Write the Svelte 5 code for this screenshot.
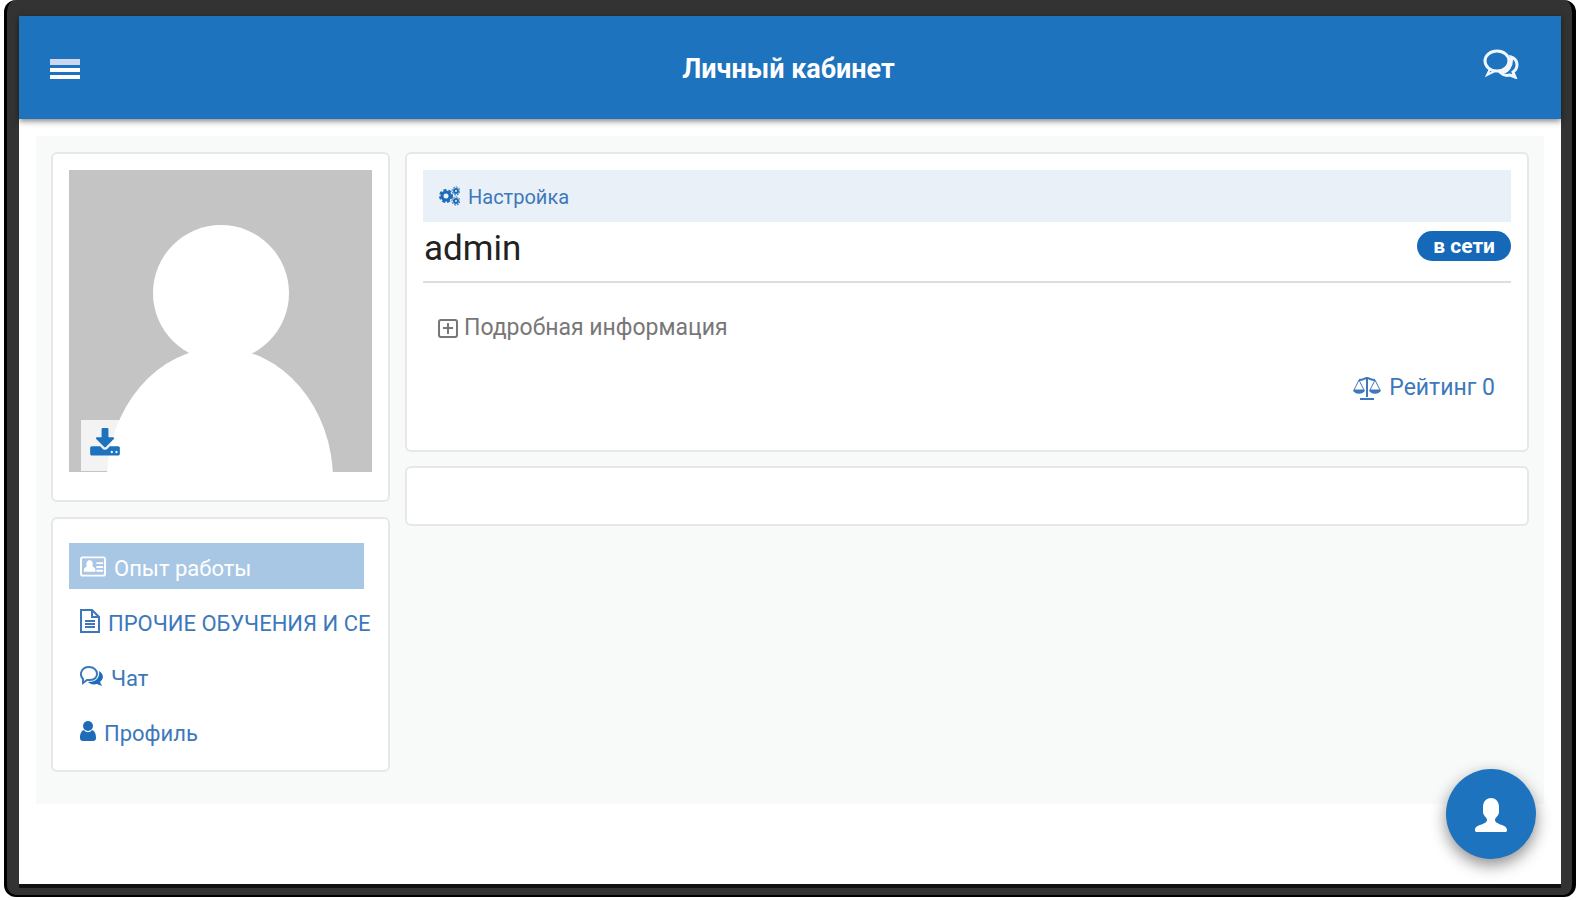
<script>
	let active = $state('work')
	let showDetails = $state(false)

	const menu = [
		{ id: 'work', icon: 'card', title: 'Опыт работы' },
		{ id: 'docs', icon: 'file', title: 'ПРОЧИЕ ОБУЧЕНИЯ И СЕ' },
		{ id: 'chat', icon: 'chat', title: 'Чат' },
		{ id: 'profile', icon: 'user', title: 'Профиль' }
	]
</script>

<div class="device">
	<div class="screen">
		<header>
			<button class="plain" aria-label="Меню">
				<svg width="30" height="20" viewBox="0 0 30 20">
					<path d="M0 0h30v6H0z" fill="#ccd6ef" />
					<path d="M0 9h30v4H0zM0 16h30v4H0z" fill="#fff" />
				</svg>
			</button>
			<h1>Личный кабинет</h1>
			<button class="plain messages" aria-label="Сообщения">
				<svg width="36" height="30" viewBox="0 0 36 30" fill="none" stroke="#f2f7ff">
					<ellipse cx="14" cy="12" rx="12" ry="10" stroke-width="3" />
					<path d="M7 20l-3 6 8-4" stroke-width="2" />
					<path d="M28 8c7 2 8 11 2 15l2 5-5-2c-4 1-7 0-9-2 6-1 12-6 10-16z" stroke-width="3" />
				</svg>
			</button>
		</header>

		<main>
			<aside>
				<section class="card photo">
					<div class="avatar">
						<svg class="person" viewBox="0 0 303 302">
							<circle cx="152" cy="123" r="68" fill="#fff" />
							<ellipse cx="151" cy="310" rx="113" ry="132" fill="#fff" />
						</svg>
						<button class="upload" aria-label="Загрузить фото">
							<svg width="32" height="32" viewBox="0 0 1792 1792" fill="currentColor">
								<path d="M1344 1344q0-26-19-45t-45-19-45 19-19 45 19 45 45 19 45-19 19-45zm256 0q0-26-19-45t-45-19-45 19-19 45 19 45 45 19 45-19 19-45zm128-224v320q0 40-28 68t-68 28h-1472q-40 0-68-28t-28-68v-320q0-40 28-68t68-28h465l135 136q58 56 136 56t136-56l136-136h464q40 0 68 28t28 68zm-325-569q17 41-14 70l-448 448q-18 19-45 19t-45-19l-448-448q-31-29-14-70 17-39 59-39h256v-448q0-26 19-45t45-19h256q26 0 45 19t19 45v448h256q42 0 59 39z" />
							</svg>
						</button>
					</div>
				</section>

				<nav class="card">
					<ul>
						{#each menu as item (item.id)}
							<li>
								<a
									href="#{item.id}"
									class:active={active === item.id}
									onclick={() => (active = item.id)}>
									{#if item.icon === 'card'}
										<svg width="26" height="21" viewBox="0 0 27 21">
											<rect x="1" y="1" width="25" height="19" rx="2" fill="none" stroke="currentColor" stroke-width="2" />
											<path d="M4 16v-3l3-3c-1-4 1-6 3-6s4 2 3 6l3 3v3zM17 6h7v2h-7zM17 10h7v2h-7zM17 14h7v2h-7z" fill="currentColor" />
										</svg>
									{:else if item.icon === 'file'}
										<svg width="20" height="24" viewBox="0 0 20 24" fill="none" stroke="currentColor" stroke-width="2">
											<path d="M1 1h11l7 7v15H1zM12 1v7h7" />
											<path d="M5 12h10M5 15h10M5 18h10" />
										</svg>
									{:else if item.icon === 'chat'}
										<svg width="23" height="20" viewBox="0 0 23 20">
											<path d="M3 13C-1 9 1 1 9 1c10 0 11 13 1 13H7l-4 3z" fill="none" stroke="currentColor" stroke-width="2" />
											<path d="M19 5c5 3 5 8 1 11l2 4-5-2c-4 1-7 0-9-2 8 0 12-4 11-11z" fill="#1e6cb8" />
										</svg>
									{:else}
										<svg width="16" height="20" viewBox="0 0 16 20" fill="#1e6cb8">
											<circle cx="8" cy="5" r="5" />
											<path d="M4 9c2 3 6 3 8 0 3 1 4 4 4 8 0 2-1 3-3 3H3c-2 0-3-1-3-3 0-4 1-7 4-8z" />
										</svg>
									{/if}
									<span>{item.title}</span>
								</a>
							</li>
						{/each}
					</ul>
				</nav>
			</aside>

			<div class="content">
				<section class="card info">
					<div class="toolbar">
						<a href="#settings">
							<svg width="21" height="20" viewBox="0 0 21 20" fill="none" stroke="#1e6cb8">
								<circle cx="7" cy="10" r="4" stroke-width="3" />
								<circle cx="7" cy="10" r="6" stroke-width="2" stroke-dasharray="3 2" />
								<circle cx="17" cy="5" r="2" stroke-width="2" />
								<circle cx="17" cy="5" r="4" stroke-width="1" stroke-dasharray="2 1" />
								<circle cx="17" cy="15" r="2" stroke-width="2" />
								<circle cx="17" cy="15" r="4" stroke-width="1" stroke-dasharray="2 1" />
							</svg>
							<span>Настройка</span>
						</a>
					</div>
					<div class="name">
						<h2>admin</h2>
						<span class="badge">в сети</span>
					</div>
					<button
						class="plain details"
						aria-expanded={showDetails}
						onclick={() => (showDetails = !showDetails)}>
						<svg width="20" height="19" viewBox="0 0 20 19" fill="none" stroke="currentColor" stroke-width="2">
							<rect x="1" y="1" width="18" height="17" rx="2" />
							<path d="M10 4v11M5 9h10" />
						</svg>
						<span>Подробная информация</span>
					</button>
					<div class="rating">
						<a href="#rating">
							<svg width="28" height="24" viewBox="0 0 28 24" fill="none" stroke="currentColor">
								<path d="M6 4c5 0 5-2 8-2s3 2 8 2M14 1v20M7 23h14" stroke-width="2" />
								<path d="M6 4L1 14h10zM22 4l-5 10h10z" />
								<path d="M0 14h12c-1 5-11 5-12 0zM16 14h12c-1 5-11 5-12 0z" fill="currentColor" stroke="none" />
							</svg>
							<span>Рейтинг 0</span>
						</a>
					</div>
				</section>
				<section class="card empty"></section>
			</div>
		</main>

		<button class="fab" aria-label="Личный кабинет">
			<svg width="34" height="36" viewBox="0 0 34 36" fill="#fff">
				<path d="M9 9c0-12 16-12 16 0v5c0 4-4 5-4 8 0 5 12 4 12 10 0 2-1 2-2 2H3c-1 0-2 0-2-2 0-6 12-5 12-10 0-3-4-4-4-8z" />
			</svg>
		</button>
	</div>
</div>

<style>
	:global(body) {
		background: #fff;
	}

	.device {
		box-sizing: border-box;
		display: flex;
		min-height: calc(100vh - 3px);
		margin: 0 2px 3px 4px;
		padding: 16px 11px 7px 12px;
		border: solid #000;
		border-width: 0 4px 2px 3px;
		border-radius: 12px;
		background: #333;
		font-family: Roboto, 'Open Sans', sans-serif;
		font-size: 23px;
		line-height: 30px;
	}

	.screen {
		position: relative;
		flex: 1;
		min-width: 0;
		border-bottom: 4px solid #111;
		background: #fff;
	}

	header {
		display: grid;
		grid-template-columns: 1fr auto 1fr;
		align-items: center;
		height: 103px;
		padding: 0 42px 0 31px;
		background: #1e73be;
		box-shadow: 0 2px 6px rgba(0, 0, 0, 0.5);
	}

	h1,
	h2 {
		margin: 0;
	}

	h1 {
		padding: 2px 0 0 8px;
		color: #fff;
		font-size: 27px;
		font-weight: 700;
	}

	.plain {
		justify-self: start;
		padding: 2px 0 0;
		border: 0;
		background: none;
		font: inherit;
		cursor: pointer;
	}

	.messages {
		justify-self: end;
		padding: 0 0 8px;
	}

	svg {
		display: block;
		flex: none;
	}

	main {
		display: flex;
		gap: 15px;
		margin: 17px;
		padding: 16px 15px 32px;
		background: #f8fafa;
	}

	aside {
		display: flex;
		flex-direction: column;
		flex: none;
		gap: 15px;
		width: 339px;
	}

	.content {
		display: flex;
		flex: 1;
		flex-direction: column;
		gap: 14px;
		min-width: 0;
	}

	.card {
		padding: 16px;
		border: 2px solid #e6e8e8;
		border-radius: 6px;
		background: #fff;
	}

	.photo {
		padding-bottom: 28px;
	}

	.avatar {
		position: relative;
		background: #c4c4c4;
	}

	.person {
		width: 100%;
	}

	.upload {
		position: absolute;
		left: 12px;
		bottom: 1px;
		padding: 8px 8px 11px;
		border: 0;
		background: rgba(255, 255, 255, 0.8);
		color: #1e73be;
		cursor: pointer;
	}

	nav.card {
		padding-top: 24px;
	}

	ul {
		display: flex;
		flex-direction: column;
		gap: 9px;
		margin: 0;
		padding: 0;
		list-style: none;
	}

	a {
		display: flex;
		align-items: center;
		gap: 8px;
		color: #3c78bb;
		text-decoration: none;
		white-space: nowrap;
	}

	li a {
		height: 46px;
		margin-right: 8px;
		padding: 0 11px;
		font-size: 22px;
	}

	li span {
		padding-top: 5px;
	}

	li a.active {
		background: #a8c7e5;
		color: #fff;
	}

	.info {
		padding-bottom: 47px;
	}

	.toolbar {
		padding: 11px 16px;
		background: #e9f0f8;
		font-size: 20px;
	}

	.toolbar span {
		padding-top: 2px;
		line-height: 28px;
	}

	.name {
		display: flex;
		align-items: flex-start;
		justify-content: space-between;
		padding: 6px 0 12px;
		border-bottom: 2px solid #ddd;
	}

	h2 {
		padding-left: 1px;
		color: #222;
		font-size: 35px;
		font-weight: 400;
		line-height: 41px;
	}

	.badge {
		margin-top: 3px;
		padding: 0 16px;
		border-radius: 15px;
		background: #1669b8;
		color: #fff;
		font-size: 21px;
		font-weight: 700;
	}

	.details {
		display: flex;
		align-items: center;
		gap: 6px;
		margin: 28px 15px 30px;
		color: #777;
	}

	.rating {
		display: flex;
		justify-content: flex-end;
		padding: 0 16px;
	}

	.empty {
		min-height: 24px;
	}

	.fab {
		position: absolute;
		right: 25px;
		bottom: 25px;
		display: flex;
		align-items: center;
		justify-content: center;
		width: 90px;
		height: 90px;
		padding: 3px 0 0;
		border: 0;
		border-radius: 50%;
		background: #1e73be;
		box-shadow: 0 6px 16px rgba(0, 0, 0, 0.45);
		cursor: pointer;
	}
</style>
